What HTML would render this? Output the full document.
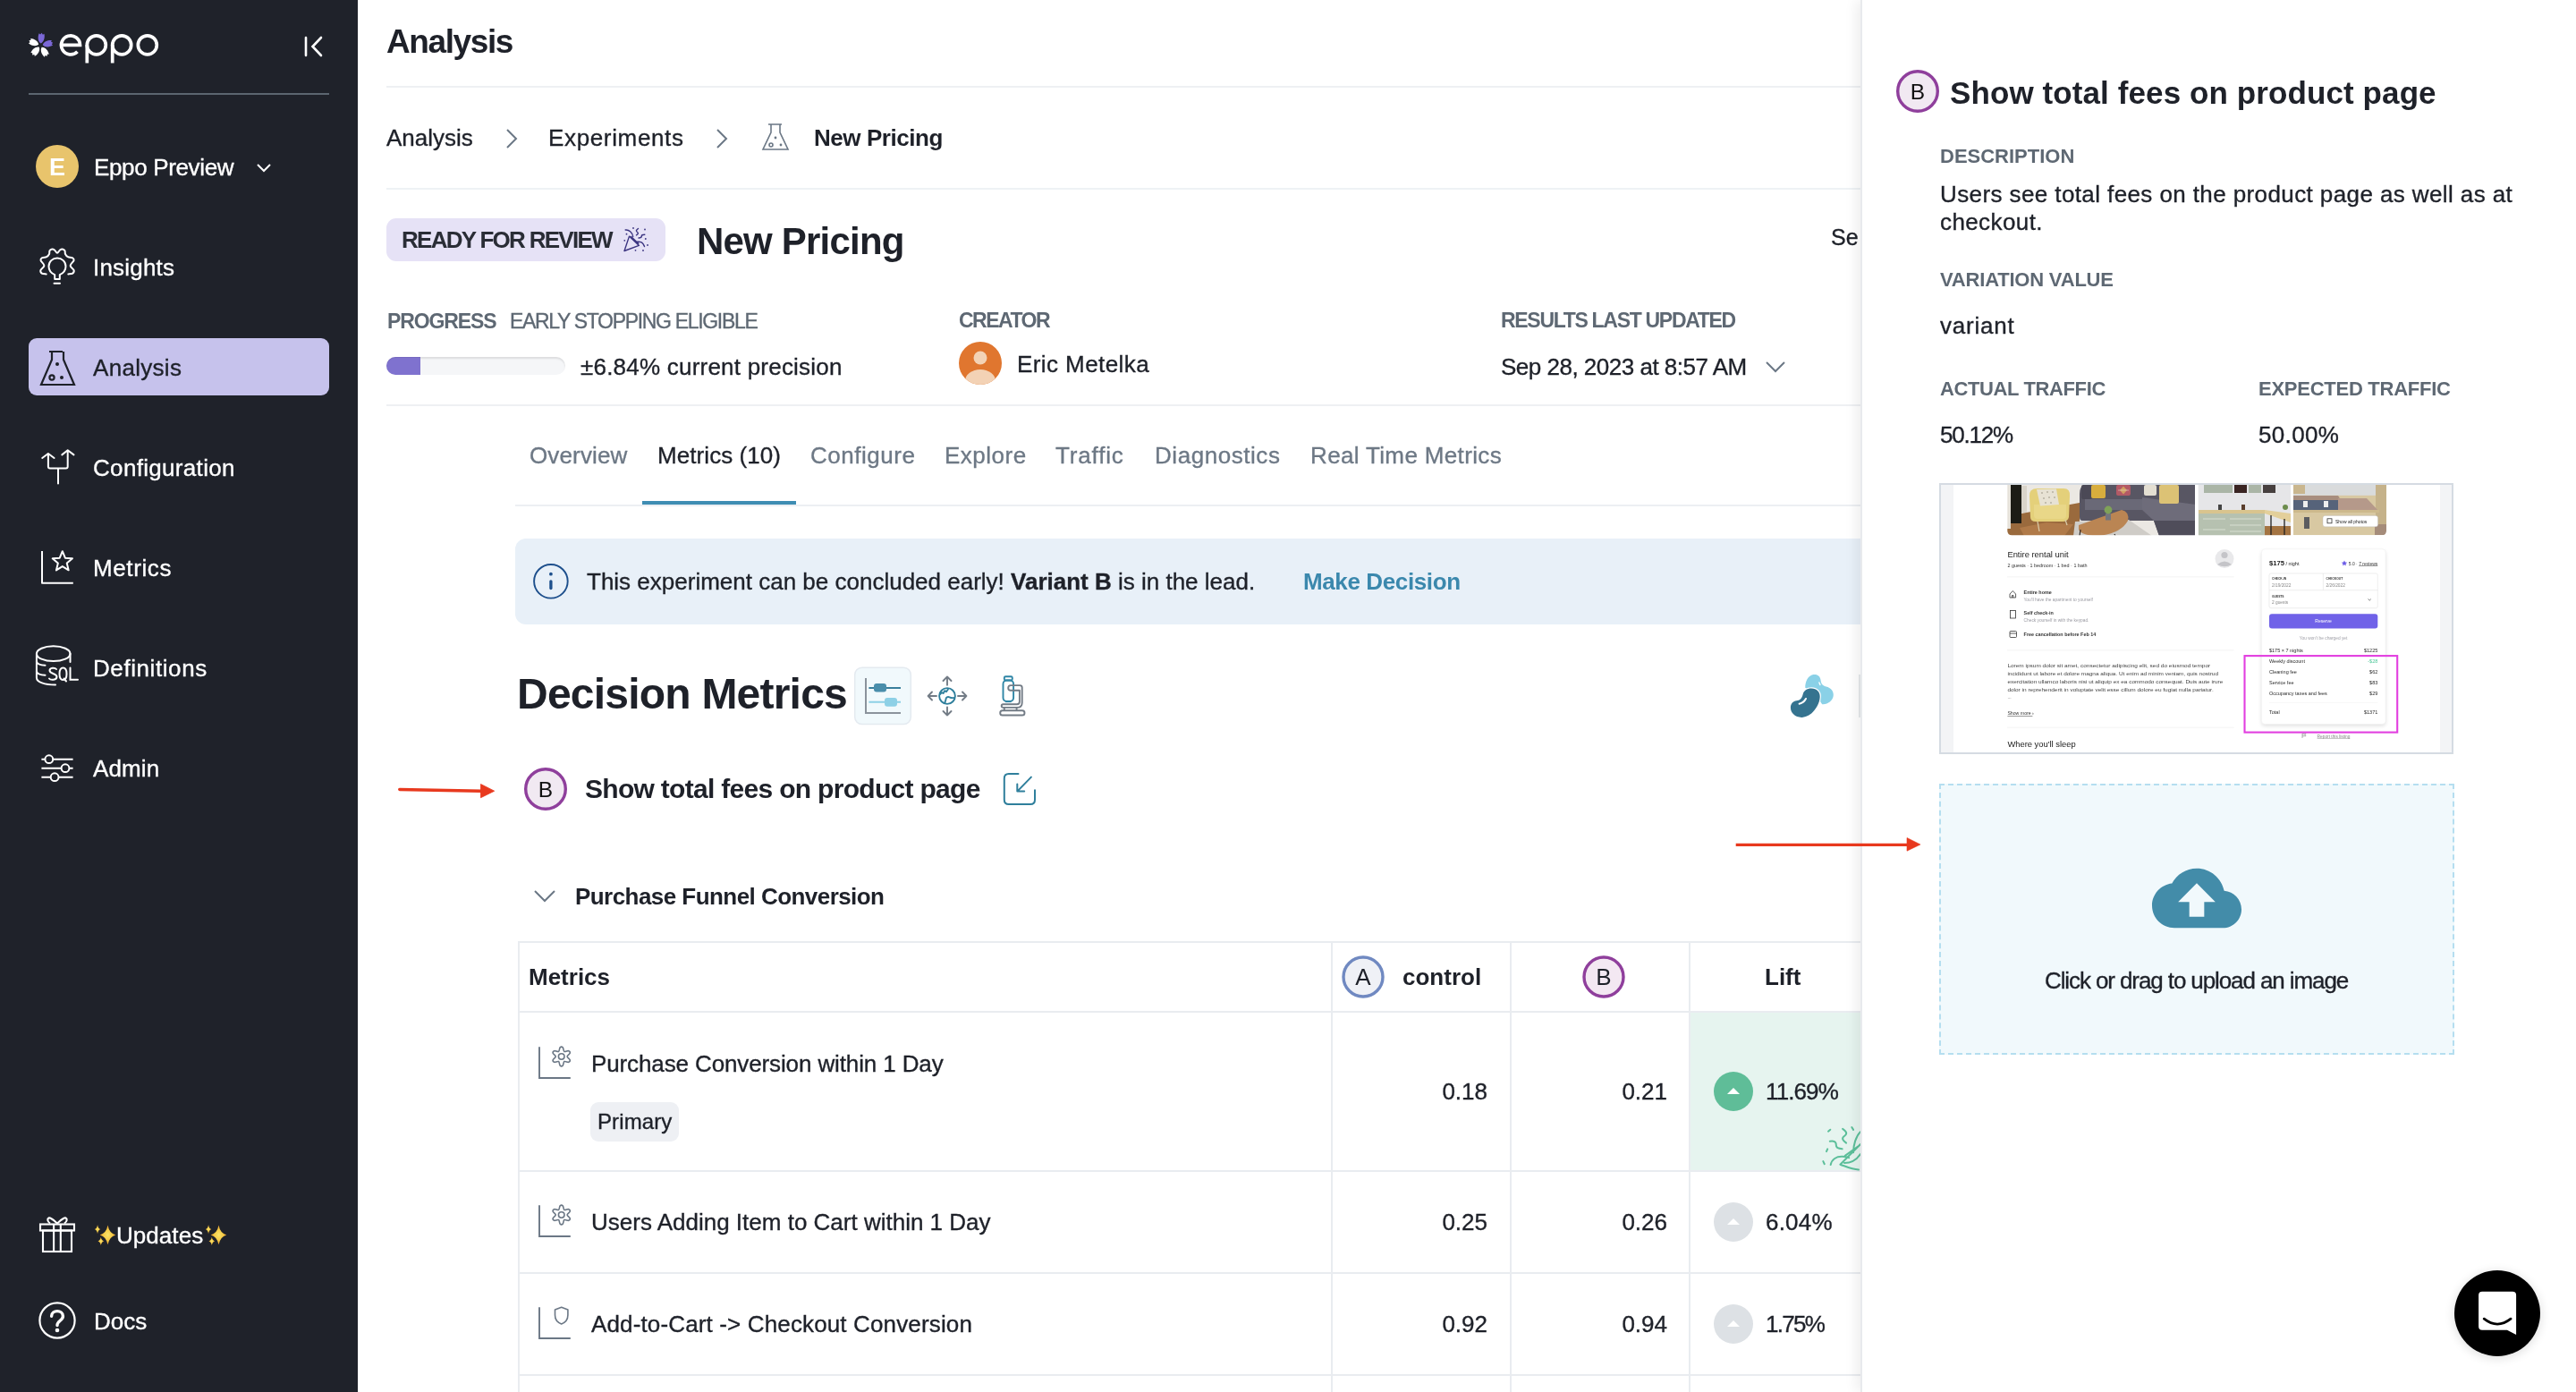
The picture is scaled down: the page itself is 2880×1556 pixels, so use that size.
<!DOCTYPE html>
<html><head><meta charset="utf-8"><title>Eppo</title>
<style>
html,body{margin:0;padding:0;width:2880px;height:1556px;overflow:hidden;background:#fff}
body{position:relative;font-family:"Liberation Sans",sans-serif}
.t{position:absolute;line-height:1;white-space:nowrap;font-family:"Liberation Sans",sans-serif;will-change:transform}
.r{position:absolute;display:block;will-change:transform}
</style></head><body>
<div class="r" style="left:0px;top:0px;width:400px;height:1556px;background:#1f222a"></div>
<svg class="r" style="left:30px;top:36px;" width="30" height="30" viewBox="0 0 30 30"><g transform="translate(15.4,14.8) scale(1.1) rotate(5)"><g transform="rotate(0)"><path d="M0 -2.2 C-3.4 -4 -3.8 -9 -2.6 -12.2 L-1.3 -11.2 L0 -12.8 L1.3 -11.2 L2.6 -12.2 C3.8 -9 3.4 -4 0 -2.2Z" fill="#7b68d6"/></g><g transform="rotate(72)"><path d="M0 -2.2 C-3.4 -4 -3.8 -9 -2.6 -12.2 L-1.3 -11.2 L0 -12.8 L1.3 -11.2 L2.6 -12.2 C3.8 -9 3.4 -4 0 -2.2Z" fill="#7b68d6"/></g><g transform="rotate(144)"><path d="M0 -2.2 C-3.4 -4 -3.8 -9 -2.6 -12.2 L-1.3 -11.2 L0 -12.8 L1.3 -11.2 L2.6 -12.2 C3.8 -9 3.4 -4 0 -2.2Z" fill="#ffffff"/></g><g transform="rotate(216)"><path d="M0 -2.2 C-3.4 -4 -3.8 -9 -2.6 -12.2 L-1.3 -11.2 L0 -12.8 L1.3 -11.2 L2.6 -12.2 C3.8 -9 3.4 -4 0 -2.2Z" fill="#ffffff"/></g><g transform="rotate(288)"><path d="M0 -2.2 C-3.4 -4 -3.8 -9 -2.6 -12.2 L-1.3 -11.2 L0 -12.8 L1.3 -11.2 L2.6 -12.2 C3.8 -9 3.4 -4 0 -2.2Z" fill="#ffffff"/></g></g></svg>
<svg class="r" style="left:0px;top:0px;" width="200" height="80" viewBox="0 0 200 80"><g fill="none" stroke="#fff" stroke-width="3.7"><path d="M69 50.3 H89.5 A10.5 10.5 0 1 0 86.5 57.8"/><circle cx="107.8" cy="50.3" r="10.5"/><path d="M97.3 50 V70.5"/><circle cx="136.2" cy="50.3" r="10.5"/><path d="M125.7 50 V70.5"/><circle cx="164.8" cy="50.3" r="10.5"/></g></svg>
<svg class="r" style="left:336px;top:36px;" width="30" height="30" viewBox="0 0 30 30"><path d="M6 6 V26 M23 6 L13.5 16 L23 26" stroke="#fff" stroke-width="2.6" fill="none" stroke-linecap="round"/></svg>
<div class="r" style="left:32px;top:104px;width:336px;height:2px;background:#5b6670"></div>
<div class="r" style="left:40px;top:162px;width:48px;height:48px;background:#e8c46c;border-radius:50%"></div>
<div class="t" style="left:55px;top:173.9px;font-size:27px;font-weight:700;color:#fff;">E</div>
<div class="t" style="left:105px;top:174.0px;font-size:26px;font-weight:400;color:#fff;-webkit-text-stroke:0.35px currentColor;letter-spacing:-0.35px;">Eppo Preview</div>
<svg class="r" style="left:285px;top:180px;" width="20" height="14" viewBox="0 0 20 14"><path d="M3 4 L10 11 L17 4" stroke="#fff" stroke-width="2" fill="none"/></svg>
<div class="r" style="left:32px;top:378px;width:336px;height:64px;background:#c6c2ec;border-radius:9px"></div>
<div class="t" style="left:104px;top:286.0px;font-size:26px;font-weight:400;color:#fff;-webkit-text-stroke:0.35px currentColor;letter-spacing:0.2px;">Insights</div>
<div class="t" style="left:104px;top:398.0px;font-size:26px;font-weight:400;color:#1e2129;-webkit-text-stroke:0.35px currentColor;letter-spacing:0.3px;">Analysis</div>
<div class="t" style="left:104px;top:510.0px;font-size:26px;font-weight:400;color:#fff;-webkit-text-stroke:0.35px currentColor;letter-spacing:0.32px;">Configuration</div>
<div class="t" style="left:104px;top:622.0px;font-size:26px;font-weight:400;color:#fff;-webkit-text-stroke:0.35px currentColor;letter-spacing:0.6px;">Metrics</div>
<div class="t" style="left:104px;top:734.0px;font-size:26px;font-weight:400;color:#fff;-webkit-text-stroke:0.35px currentColor;letter-spacing:0.58px;">Definitions</div>
<div class="t" style="left:104px;top:846.0px;font-size:26px;font-weight:400;color:#fff;-webkit-text-stroke:0.35px currentColor;letter-spacing:0.1px;">Admin</div>
<svg class="r" style="left:36px;top:268px;" width="56" height="56" viewBox="0 0 56 56"><g fill="none" stroke="#fff" stroke-width="2" stroke-linecap="round" stroke-linejoin="round"><path d="M15.7 38.4 C14.88 38.27 11.85 38.33 10.8 37.6 C9.75 36.87 8.97 35.43 9.4 34 C9.83 32.57 13.38 30.83 13.4 29 C13.42 27.17 9.87 24.47 9.5 23 C9.13 21.53 10.12 20.83 11.2 20.2 C12.28 19.57 14.70 19.90 16 19.2 C17.30 18.50 18.42 17.17 19 16 C19.58 14.83 18.97 13.12 19.5 12.2 C20.03 11.28 21.28 10.62 22.2 10.5 C23.12 10.38 24.03 10.78 25 11.5 C25.97 12.22 27.00 14.80 28 14.8 C29.00 14.80 30.03 12.22 31 11.5 C31.97 10.78 32.88 10.38 33.8 10.5 C34.72 10.62 35.97 11.28 36.5 12.2 C37.03 13.12 36.42 14.83 37 16 C37.58 17.17 38.70 18.50 40 19.2 C41.30 19.90 43.70 19.57 44.8 20.2 C45.90 20.83 46.97 21.53 46.6 23 C46.23 24.47 42.60 27.17 42.6 29 C42.60 30.83 46.17 32.57 46.6 34 C47.03 35.43 46.25 36.87 45.2 37.6 C44.15 38.33 41.12 38.27 40.3 38.4"/><path d="M25.2 44 V39.2 C20.5 37 18.5 33.5 18.5 29.8 C18.5 24.5 22.8 20.4 28 20.4 C33.2 20.4 37.5 24.5 37.5 29.8 C37.5 33.5 35.5 37 30.8 39.2 V44 Z"/><path d="M24.5 48.7 H31"/></g></svg>
<svg class="r" style="left:40px;top:388px;" width="48" height="48" viewBox="0 0 48 48"><g fill="none" stroke="#1e2129" stroke-width="2.2"><path d="M15 5 H30 M18 5 V14 L6 42 H43 L31 14 V5"/><circle cx="18" cy="34" r="2.6"/></g><circle cx="24" cy="19" r="2" fill="#1e2129"/><circle cx="29" cy="34" r="2" fill="#1e2129"/></svg>
<svg class="r" style="left:30px;top:490px;" width="70" height="70" viewBox="0 0 70 70"><g fill="none" stroke="#fff" stroke-width="2" stroke-linecap="round" stroke-linejoin="round"><path d="M17.2 22 L23.9 17 L30.6 22 M23.9 17.3 V31.4 Q23.9 33.4 25.9 33.4 H43.7 Q45.7 33.4 45.7 31.4 V13.5 M39.3 18.4 L45.7 13.2 L52.5 18.4 M35 33.4 V50.5"/></g></svg>
<svg class="r" style="left:30px;top:600px;" width="70" height="70" viewBox="0 0 70 70"><g fill="none" stroke="#fff" stroke-width="2" stroke-linejoin="round"><path d="M17 16 V51.7 H51.8"/><path d="M39.80 16.20 L42.86 23.69 L50.93 24.28 L44.75 29.51 L46.68 37.37 L39.80 33.10 L32.92 37.37 L34.85 29.51 L28.67 24.28 L36.74 23.69Z"/></g></svg>
<svg class="r" style="left:30px;top:715px;" width="70" height="70" viewBox="0 0 70 70"><g fill="none" stroke="#fff" stroke-width="2" stroke-linecap="round"><ellipse cx="29.7" cy="15.7" rx="18.8" ry="8.4"/><path d="M10.9 15.7 V42.5 C10.9 47.5 20 50.5 32 50.5"/><path d="M48.5 15.7 V25"/><path d="M10.9 24.5 C11.5 27 15 28.5 20.5 28.8 M10.9 35.5 C11.5 38 15 39.5 20.5 39.8"/><path d="M33 33 C31.5 31 25.5 31 25.5 34.5 C25.5 38.5 33.5 37.5 33.5 41.5 C33.5 45.5 26.5 45.5 25 43.5"/><path d="M40.5 31.5 C37.5 31.5 36.5 34 36.5 38.2 C36.5 42.5 37.5 45 40.5 45 C43.5 45 44.5 42.5 44.5 38.2 C44.5 34 43.5 31.5 40.5 31.5 Z M41.5 43.5 L44 46.5"/><path d="M48.5 31.5 V44.8 H57"/></g></svg>
<svg class="r" style="left:30px;top:820px;" width="70" height="70" viewBox="0 0 70 70"><g fill="none" stroke="#fff" stroke-width="2"><path d="M16.4 28.7 H20.2 M29.4 28.7 H51.6 M16.4 38.7 H38.4 M47.6 38.7 H51.6 M16.4 48.7 H26.5 M35.7 48.7 H51.6"/><circle cx="24.8" cy="28.7" r="4.4"/><circle cx="43" cy="38.7" r="4.4"/><circle cx="31.1" cy="48.7" r="4.4"/></g></svg>
<svg class="r" style="left:40px;top:1356px;" width="48" height="48" viewBox="0 0 48 48"><g fill="none" stroke="#fff" stroke-width="2.1"><rect x="5" y="12.5" width="38" height="7"/><rect x="8" y="19.5" width="32" height="23.5"/><path d="M20.1 12.5 V43 M27.8 12.5 V43"/><path d="M24 11.5 C20 8 16.5 4.5 14.5 5.5 C12.5 6.5 13 9.5 16 11.5 M24 11.5 C28 8 31.5 4.5 33.5 5.5 C35.5 6.5 35 9.5 32 11.5"/></g></svg>
<svg class="r" style="left:100px;top:1362px;" width="35" height="35" viewBox="0 0 35 35"><defs><radialGradient id="sg"><stop offset="0" stop-color="#f8e36a"/><stop offset="0.6" stop-color="#f4c743"/><stop offset="1" stop-color="#e99a2c"/></radialGradient></defs><g fill="url(#sg)"><path d="M20.5 7.499999999999998 Q22.084 16.438 29.3 18.4 Q22.084 20.362 20.5 29.299999999999997 Q18.916 20.362 11.7 18.4 Q18.916 16.438 20.5 7.499999999999998 Z"/><path d="M9.05 6.8999999999999995 Q9.644 11.164 12.350000000000001 12.1 Q9.644 13.036 9.05 17.3 Q8.456000000000001 13.036 5.750000000000001 12.1 Q8.456000000000001 11.164 9.05 6.8999999999999995 Z"/><path d="M12.8 20.799999999999997 Q13.412 24.572 16.2 25.4 Q13.412 26.227999999999998 12.8 30.0 Q12.188 26.227999999999998 9.4 25.4 Q12.188 24.572 12.8 20.799999999999997 Z"/></g></svg>
<svg class="r" style="left:223.5px;top:1362px;" width="35" height="35" viewBox="0 0 35 35"><defs><radialGradient id="sg2"><stop offset="0" stop-color="#f8e36a"/><stop offset="0.6" stop-color="#f4c743"/><stop offset="1" stop-color="#e99a2c"/></radialGradient></defs><g fill="url(#sg2)"><path d="M20.5 7.499999999999998 Q22.084 16.438 29.3 18.4 Q22.084 20.362 20.5 29.299999999999997 Q18.916 20.362 11.7 18.4 Q18.916 16.438 20.5 7.499999999999998 Z"/><path d="M9.05 6.8999999999999995 Q9.644 11.164 12.350000000000001 12.1 Q9.644 13.036 9.05 17.3 Q8.456000000000001 13.036 5.750000000000001 12.1 Q8.456000000000001 11.164 9.05 6.8999999999999995 Z"/><path d="M12.8 20.799999999999997 Q13.412 24.572 16.2 25.4 Q13.412 26.227999999999998 12.8 30.0 Q12.188 26.227999999999998 9.4 25.4 Q12.188 24.572 12.8 20.799999999999997 Z"/></g></svg>
<div class="t" style="left:129.6px;top:1368.0px;font-size:26px;font-weight:400;color:#fff;-webkit-text-stroke:0.35px currentColor;letter-spacing:0.05px;">Updates</div>
<svg class="r" style="left:40px;top:1452px;" width="48" height="48" viewBox="0 0 48 48"><circle cx="24" cy="24" r="19.6" fill="none" stroke="#fff" stroke-width="2.2"/><path d="M17.6 19.2 C17.6 11.8 30.4 11.8 30.4 19.2 C30.4 24.2 24 24.4 24 29.5" fill="none" stroke="#fff" stroke-width="3.4" stroke-linecap="round"/><circle cx="24" cy="35" r="2.3" fill="#fff"/></svg>
<div class="t" style="left:105px;top:1464.0px;font-size:26px;font-weight:400;color:#fff;-webkit-text-stroke:0.35px currentColor;">Docs</div>
<div class="r" style="left:400px;top:0px;width:1682px;height:1556px;background:#fff"></div>
<div class="t" style="left:432px;top:27.9px;font-size:37px;font-weight:700;color:#1e2129;letter-spacing:-1.4px;">Analysis</div>
<div class="r" style="left:432px;top:96px;width:1650px;height:2px;background:#eef0f3"></div>
<div class="t" style="left:432px;top:141.3px;font-size:26px;font-weight:400;color:#1e2129;-webkit-text-stroke:0.35px currentColor;">Analysis</div>
<svg class="r" style="left:560px;top:142px;" width="24" height="26" viewBox="0 0 24 26"><path d="M7 3 L17 13 L7 23" fill="none" stroke="#6b7785" stroke-width="2"/></svg>
<div class="t" style="left:613px;top:141.3px;font-size:26px;font-weight:400;color:#1e2129;-webkit-text-stroke:0.35px currentColor;letter-spacing:0.65px;">Experiments</div>
<svg class="r" style="left:795px;top:142px;" width="24" height="26" viewBox="0 0 24 26"><path d="M7 3 L17 13 L7 23" fill="none" stroke="#6b7785" stroke-width="2"/></svg>
<svg class="r" style="left:850px;top:136px;" width="34" height="34" viewBox="0 0 34 34"><g fill="none" stroke="#6b7785" stroke-width="1.6"><path d="M9 3 H24 M12 3 V12 L3 31 H31 L22 12 V3"/><circle cx="12" cy="26" r="2"/></g><circle cx="17" cy="18" r="1.4" fill="#6b7785"/><circle cx="23" cy="26" r="1.4" fill="#6b7785"/></svg>
<div class="t" style="left:910px;top:141.3px;font-size:26px;font-weight:700;color:#1e2129;letter-spacing:-0.45px;">New Pricing</div>
<div class="r" style="left:432px;top:210px;width:1650px;height:2px;background:#eef2f5"></div>
<div class="r" style="left:432px;top:244px;width:312px;height:48px;background:#e6e2f6;border-radius:11px"></div>
<div class="t" style="left:449px;top:255.4px;font-size:26px;font-weight:700;color:#2a2d36;letter-spacing:-1.72px;">READY FOR REVIEW</div>
<svg class="r" style="left:690px;top:248px;" width="45" height="40" viewBox="0 0 45 40"><g fill="none" stroke="#3b3480" stroke-width="1.4" stroke-linecap="round" stroke-linejoin="round"><path d="M8 32.5 L13.5 16.1 L24.4 26.4 Z M15.6 16.6 L23.8 24.2"/><path d="M9.2 9 C13 8.5 17 11.5 17.7 16.5 M23.5 7.5 C21 9.5 20.5 10 23 12 C24 13 23 14 21.5 14.8 M24 18 C26.5 18 27.3 17 27.3 16 C27.3 14.5 29 14.3 30.8 14.3 M22.5 22.3 C25 22.3 27 22 28 23.5 C29.5 25 30 26.5 30.5 27.5"/></g><g fill="#3b3480"><circle cx="10.5" cy="13.7" r="0.9"/><circle cx="8.3" cy="20.8" r="0.9"/><circle cx="18" cy="7" r="0.9"/><circle cx="31" cy="8.5" r="0.9"/><circle cx="31.8" cy="19" r="0.9"/><circle cx="34" cy="26" r="0.9"/><circle cx="20.5" cy="31.8" r="0.9"/><circle cx="29" cy="32" r="0.9"/></g></svg>
<div class="t" style="left:779px;top:248.9px;font-size:42px;font-weight:700;color:#1e2129;letter-spacing:-0.8px;">New Pricing</div>
<div class="t" style="left:2047px;top:252.7px;font-size:25px;font-weight:400;color:#1e2129;-webkit-text-stroke:0.35px currentColor;">Se</div>
<div class="t" style="left:433px;top:348.1px;font-size:23px;font-weight:700;color:#5e6873;letter-spacing:-1.1px;">PROGRESS</div>
<div class="t" style="left:570px;top:348.1px;font-size:23px;font-weight:400;color:#5e6873;-webkit-text-stroke:0.35px currentColor;letter-spacing:-1.32px;">EARLY STOPPING ELIGIBLE</div>
<div class="r" style="left:432px;top:399px;width:200px;height:20px;background:#f5f6f8;border-radius:10px;box-shadow:inset 0 2px 2px rgba(0,0,0,0.10)"></div>
<div class="r" style="left:432px;top:399px;width:38px;height:20px;background:#7f72cf;border-radius:10px 0 0 10px;box-shadow:inset 0 1px 1px rgba(0,0,0,0.08)"></div>
<div class="t" style="left:649px;top:396.7px;font-size:26px;font-weight:400;color:#1e2129;-webkit-text-stroke:0.35px currentColor;letter-spacing:0.22px;">±6.84% current precision</div>
<div class="t" style="left:1072px;top:346.8px;font-size:23px;font-weight:700;color:#5e6873;letter-spacing:-1.5px;">CREATOR</div>
<svg class="r" style="left:1072px;top:381.5px" width="48" height="48" viewBox="0 0 48 48"><defs><clipPath id="cc"><circle cx="24" cy="24" r="24"/></clipPath></defs><g clip-path="url(#cc)"><rect width="48" height="48" fill="#e0762f"/><circle cx="24" cy="18" r="7.5" fill="#f3d2b5"/><ellipse cx="24" cy="44" rx="17" ry="13" fill="#f3d2b5"/></g></svg>
<div class="t" style="left:1137px;top:393.9px;font-size:26px;font-weight:400;color:#1e2129;-webkit-text-stroke:0.35px currentColor;letter-spacing:0.42px;">Eric Metelka</div>
<div class="t" style="left:1678px;top:346.8px;font-size:23px;font-weight:700;color:#5e6873;letter-spacing:-1.3px;">RESULTS LAST UPDATED</div>
<div class="t" style="left:1678px;top:397.2px;font-size:26px;font-weight:400;color:#1e2129;-webkit-text-stroke:0.35px currentColor;letter-spacing:-0.5px;">Sep 28, 2023 at 8:57 AM</div>
<svg class="r" style="left:1972px;top:400px;" width="28" height="22" viewBox="0 0 28 22"><path d="M3 5 L13 15 L23 5" fill="none" stroke="#6b7785" stroke-width="2"/></svg>
<div class="r" style="left:432px;top:452px;width:1650px;height:2px;background:#eef0f3"></div>
<div class="t" style="left:592px;top:495.5px;font-size:26px;font-weight:400;color:#6d7885;-webkit-text-stroke:0.35px currentColor;letter-spacing:0.14px;">Overview</div>
<div class="t" style="left:735px;top:495.5px;font-size:26px;font-weight:400;color:#1e2129;-webkit-text-stroke:0.35px currentColor;letter-spacing:0.07px;">Metrics (10)</div>
<div class="t" style="left:906px;top:495.5px;font-size:26px;font-weight:400;color:#6d7885;-webkit-text-stroke:0.35px currentColor;letter-spacing:0.53px;">Configure</div>
<div class="t" style="left:1056px;top:495.5px;font-size:26px;font-weight:400;color:#6d7885;-webkit-text-stroke:0.35px currentColor;letter-spacing:0.5px;">Explore</div>
<div class="t" style="left:1180px;top:495.5px;font-size:26px;font-weight:400;color:#6d7885;-webkit-text-stroke:0.35px currentColor;letter-spacing:0.84px;">Traffic</div>
<div class="t" style="left:1291px;top:495.5px;font-size:26px;font-weight:400;color:#6d7885;-webkit-text-stroke:0.35px currentColor;letter-spacing:0.55px;">Diagnostics</div>
<div class="t" style="left:1465px;top:495.5px;font-size:26px;font-weight:400;color:#6d7885;-webkit-text-stroke:0.35px currentColor;letter-spacing:0.35px;">Real Time Metrics</div>
<div class="r" style="left:576px;top:564px;width:1506px;height:2px;background:#eceff3"></div>
<div class="r" style="left:718px;top:560px;width:172px;height:4px;background:#3f8db3"></div>
<div class="r" style="left:576px;top:602px;width:1520px;height:96px;background:#e8f0f8;border-radius:12px"></div>
<svg class="r" style="left:594px;top:628px;" width="44" height="44" viewBox="0 0 44 44"><circle cx="21.9" cy="21.8" r="18.8" fill="none" stroke="#1d4f8c" stroke-width="1.9"/><path d="M21.9 21.8 V29.6" stroke="#1d4f8c" stroke-width="3.3" stroke-linecap="round"/><circle cx="21.9" cy="13.7" r="1.9" fill="#1d4f8c"/></svg>
<div class="t" style="left:656px;top:637.4px;font-size:26px;font-weight:400;color:#1e2129;-webkit-text-stroke:0.35px currentColor;">This experiment can be concluded early! <b>Variant B</b> is in the lead.</div>
<div class="t" style="left:1457px;top:637.4px;font-size:26px;font-weight:700;color:#3b88ad;letter-spacing:-0.38px;">Make Decision</div>
<div class="t" style="left:578px;top:751.7px;font-size:48px;font-weight:700;color:#1e2129;letter-spacing:-0.78px;">Decision Metrics</div>
<svg class="r" style="left:950px;top:740px;" width="210" height="75" viewBox="0 0 210 75"><rect x="5.7" y="6.2" width="62.6" height="63.3" rx="8" fill="#f1f9fc" stroke="#e4eaf0" stroke-width="1.5"/><path d="M18 18 V57 H57" fill="none" stroke="#8b939c" stroke-width="2"/><path d="M21.4 29 H57" stroke="#3a7f9c" stroke-width="2"/><rect x="27" y="24" width="14" height="9.6" rx="3" fill="#4a8eab"/><path d="M21.4 44.8 H57" stroke="#8dd0e6" stroke-width="2"/><rect x="39" y="40" width="14" height="9.7" rx="3" fill="#8dd0e6"/><g fill="none" stroke="#737c86" stroke-width="1.9" stroke-linecap="round" stroke-linejoin="round"><path d="M109 16.5 V25.7 M104.5 21 L109 16.5 L113.5 21 M109 50.5 V59.5 M104.5 55 L109 59.5 L113.5 55 M87.6 38 H97 M92 33.5 L87.6 38 L92 42.5 M121 38 H130.4 M126 33.5 L130.4 38 L126 42.5"/></g><g fill="none" stroke="#2f7f9c" stroke-width="1.9" stroke-linejoin="round"><circle cx="109" cy="38" r="8.9"/><path d="M100.8 36.5 L102.8 34.2 L104.6 35 L106.2 32.2 L108 33.2 L110.3 30 M106.5 46.5 C106 44.5 107.5 43.5 107.5 41.5 C107.5 39.5 109.5 38.5 111.5 39.3 C113 40 114.5 40.5 117.2 39.8"/></g><g fill="none" stroke="#2f86a6" stroke-width="1.9"><rect x="172.8" y="16.3" width="9" height="4.2" rx="1.5"/><rect x="171.5" y="20.5" width="11.6" height="23.5" rx="4"/><path d="M174 44.2 H180.5"/></g><g fill="none" stroke="#737c86" stroke-width="1.9" stroke-linejoin="round"><path d="M180 26.1 H190.2 Q192.7 26.1 192.7 28.6 V45.5 Q192.7 50.9 187.3 50.9 H171.6 Q169.7 50.9 169.7 49.1 Q169.7 47.3 171.6 47.3 H186.9 Q189.9 47.3 189.9 44.3 V31.8 H180 Q177.2 31.8 177.2 29 Q177.2 26.1 180 26.1 Z"/><path d="M172.8 51 V54.2 M186.6 51 V54.2"/><rect x="168.2" y="54.3" width="27.3" height="5.2" rx="2.6"/></g></svg>
<svg class="r" style="left:1995px;top:748px;" width="60" height="60" viewBox="0 0 60 60"><path d="M23.3 20.7 C23 15 26 7 32.3 6 C37 5.3 40 8 40.5 12 C41 15.5 42 18.5 46.6 19.4 C52 20.5 55.5 25 54.7 30 C54 35 48 40 42.2 39.2 L36 30 Z" fill="#8ad1e7"/><path d="M38.9 15 L39.9 17.6" stroke="#fff" stroke-width="1.4" stroke-linecap="round"/><path d="M30.2 21.5 C36 21.5 40 25.5 39.7 31 C39.5 38 35 45 30.2 49.6 C26 53 22 54 19.4 53.9 C12 54 7 49 6.9 43.1 C6.8 38.5 10 35.5 13.5 35.2 C17 35 19.5 33 20.7 28 C21.8 24 25 21.5 30.2 21.5 Z" fill="#35738f" stroke="#fff" stroke-width="2.4" paint-order="stroke"/><path d="M16.6 38.8 C19.5 38 22.5 36 24 33" fill="none" stroke="#fff" stroke-width="2" stroke-linecap="round"/></svg>
<div class="r" style="left:2078px;top:754px;width:2.5px;height:48px;background:#e6e9ec"></div>
<svg class="r" style="left:440px;top:870px;" width="120" height="28" viewBox="0 0 120 28"><path d="M6.75 12.4 L98 14.2" stroke="#e8391e" stroke-width="3.5" stroke-linecap="round"/><path d="M97.5 6.5 L112.7 14.2 L97.5 21.7 Z" fill="#e8391e" stroke="#e8391e" stroke-width="0.8" stroke-linejoin="round"/></svg>
<svg class="r" style="left:584px;top:856px;" width="52" height="52" viewBox="0 0 52 52"><circle cx="26" cy="26" r="22.3" fill="#f1e9f2" stroke="#8f3f9c" stroke-width="3.4"/><text x="26" y="34.6" text-anchor="middle" font-family="Liberation Sans" font-size="24.5" fill="#111">B</text></svg>
<div class="t" style="left:654px;top:867.1px;font-size:30px;font-weight:700;color:#1e2129;letter-spacing:-0.7px;">Show total fees on product page</div>
<svg class="r" style="left:1120px;top:862px;" width="40" height="40" viewBox="0 0 40 40"><g fill="none" stroke="#2f7f9c" stroke-width="2" stroke-linecap="round" stroke-linejoin="round"><path d="M18.5 2.9 H7.8 Q2.8 2.9 2.8 7.9 V31.9 Q2.8 36.9 7.8 36.9 H32 Q37 36.9 37 31.9 V21.3"/><path d="M32.9 6.6 L17.8 22.1 M17.3 14.5 V22.6 H25.2"/></g></svg>
<svg class="r" style="left:594px;top:990px;" width="32" height="24" viewBox="0 0 32 24"><path d="M4 6 L15 17 L26 6" fill="none" stroke="#6b7785" stroke-width="2"/></svg>
<div class="t" style="left:643px;top:989.4px;font-size:26px;font-weight:700;color:#1e2129;letter-spacing:-0.55px;">Purchase Funnel Conversion</div>
<div class="r" style="left:579px;top:1052px;width:1503px;height:2px;background:#e9ecf0"></div>
<div class="r" style="left:579px;top:1052px;width:2px;height:504px;background:#e9ecf0"></div>
<div class="r" style="left:579px;top:1130px;width:1503px;height:2px;background:#e9ecf0"></div>
<div class="r" style="left:579px;top:1308px;width:1503px;height:2px;background:#e9ecf0"></div>
<div class="r" style="left:579px;top:1422px;width:1503px;height:2px;background:#e9ecf0"></div>
<div class="r" style="left:579px;top:1536px;width:1503px;height:2px;background:#e9ecf0"></div>
<div class="r" style="left:1488px;top:1052px;width:2px;height:504px;background:#e9ecf0"></div>
<div class="r" style="left:1688px;top:1052px;width:2px;height:504px;background:#e9ecf0"></div>
<div class="r" style="left:1888px;top:1052px;width:2px;height:504px;background:#e9ecf0"></div>
<div class="t" style="left:591px;top:1079.3px;font-size:26px;font-weight:700;color:#1e2129;">Metrics</div>
<svg class="r" style="left:1499px;top:1067px;" width="50" height="50" viewBox="0 0 50 50"><circle cx="25" cy="25" r="22" fill="#eff1f6" stroke="#7089c1" stroke-width="3.4"/><text x="25" y="34" text-anchor="middle" font-family="Liberation Sans" font-size="26" fill="#1e2129">A</text></svg>
<div class="t" style="left:1568px;top:1079.0px;font-size:26px;font-weight:700;color:#1e2129;">control</div>
<svg class="r" style="left:1768px;top:1067px;" width="50" height="50" viewBox="0 0 50 50"><circle cx="25" cy="25" r="22" fill="#f3e8f2" stroke="#8f3f9c" stroke-width="3.4"/><text x="25" y="34" text-anchor="middle" font-family="Liberation Sans" font-size="26" fill="#1e2129">B</text></svg>
<div class="t" style="left:1973px;top:1079.0px;font-size:26px;font-weight:700;color:#1e2129;">Lift</div>
<div class="r" style="left:1890px;top:1132px;width:192px;height:176px;background:#e6f4ef"></div>
<svg class="r" style="left:599px;top:1168px;" width="42" height="40" viewBox="0 0 42 40"><g fill="none" stroke="#6b7785" stroke-width="1.9"><path d="M4 2.3 V37 H38.8"/></g><g fill="none" stroke="#6b7785" stroke-width="1.6"><path d="M27.19 2.91 C27.98 2.15 29.43 2.15 30.21 2.91 C31.00 3.67 30.82 6.84 31.9 7.46 C32.98 8.08 35.63 6.35 36.68 6.65 C37.73 6.95 38.45 8.20 38.19 9.26 C37.93 10.32 35.10 11.75 35.1 13.0 C35.10 14.25 37.93 15.68 38.19 16.74 C38.45 17.80 37.73 19.05 36.68 19.35 C35.63 19.65 32.98 17.92 31.9 18.54 C30.82 19.16 31.00 22.33 30.21 23.09 C29.43 23.85 27.98 23.85 27.19 23.09 C26.41 22.33 26.58 19.16 25.5 18.54 C24.42 17.92 21.77 19.65 20.72 19.35 C19.67 19.05 18.95 17.80 19.21 16.74 C19.47 15.68 22.30 14.25 22.3 13.0 C22.30 11.75 19.47 10.32 19.21 9.26 C18.95 8.20 19.67 6.95 20.72 6.65 C21.77 6.35 24.42 8.08 25.5 7.46 C26.58 6.84 26.41 3.67 27.19 2.91Z"/><circle cx="28.7" cy="13" r="3.3"/></g></svg>
<div class="t" style="left:661px;top:1175.6px;font-size:26px;font-weight:400;color:#1e2129;-webkit-text-stroke:0.35px currentColor;letter-spacing:-0.12px;">Purchase Conversion within 1 Day</div>
<div class="r" style="left:660px;top:1232px;width:99px;height:44px;background:#eef0f4;border-radius:9px"></div>
<div class="t" style="left:668px;top:1241.5px;font-size:24px;font-weight:400;color:#1e2129;-webkit-text-stroke:0.35px currentColor;letter-spacing:0.1px;">Primary</div>
<div class="t" style="left:1663px;top:1207.0px;font-size:26px;font-weight:400;color:#1e2129;-webkit-text-stroke:0.35px currentColor;transform:translateX(-100%)">0.18</div>
<div class="t" style="left:1864px;top:1207.0px;font-size:26px;font-weight:400;color:#1e2129;-webkit-text-stroke:0.35px currentColor;transform:translateX(-100%)">0.21</div>
<svg class="r" style="left:1916px;top:1198px;" width="44" height="44" viewBox="0 0 44 44"><circle cx="22" cy="22" r="22" fill="#5fbd98"/><path d="M15 25 L22 18 L29 25 Z" fill="#fff"/></svg>
<div class="t" style="left:1974px;top:1207.0px;font-size:26px;font-weight:400;color:#1e2129;-webkit-text-stroke:0.35px currentColor;letter-spacing:-0.9px;">11.69%</div>
<svg class="r" style="left:2020px;top:1250px" width="60" height="60" viewBox="0 0 60 60"><g fill="none" stroke="#5cbf9a" stroke-width="2" stroke-linecap="round" stroke-linejoin="round"><path d="M24 14.7 L26.3 12.7 M50.3 10 L52.1 12.9 M22 37.2 L23.2 34.3 M18.3 48.1 L19.8 51.2"/><path d="M40.1 11.8 C43.5 14 46 17 42.5 19.5 C38 22.5 40.5 25 44.1 27.6"/><path d="M25.8 25.8 C30 25 33 26 32.8 30 C32.6 33.5 36 34 39.6 34.3"/><path d="M26.7 52.1 C28 46 33 42.5 40 42.8 C43 43 45.5 43.5 47.2 44.1"/><path d="M37.4 51.7 L60 29 M37.4 51.7 C44 54 50 57 58 57.5 M60 40 C56 46 50 50 42 50 M52.1 38.3 C52 30 55 20 60 15.1 M42.8 41.9 L60 29.5"/></g></svg>
<svg class="r" style="left:599px;top:1345px;" width="42" height="40" viewBox="0 0 42 40"><g fill="none" stroke="#6b7785" stroke-width="1.9"><path d="M4 2.3 V37 H38.8"/></g><g fill="none" stroke="#6b7785" stroke-width="1.6"><path d="M27.19 2.91 C27.98 2.15 29.43 2.15 30.21 2.91 C31.00 3.67 30.82 6.84 31.9 7.46 C32.98 8.08 35.63 6.35 36.68 6.65 C37.73 6.95 38.45 8.20 38.19 9.26 C37.93 10.32 35.10 11.75 35.1 13.0 C35.10 14.25 37.93 15.68 38.19 16.74 C38.45 17.80 37.73 19.05 36.68 19.35 C35.63 19.65 32.98 17.92 31.9 18.54 C30.82 19.16 31.00 22.33 30.21 23.09 C29.43 23.85 27.98 23.85 27.19 23.09 C26.41 22.33 26.58 19.16 25.5 18.54 C24.42 17.92 21.77 19.65 20.72 19.35 C19.67 19.05 18.95 17.80 19.21 16.74 C19.47 15.68 22.30 14.25 22.3 13.0 C22.30 11.75 19.47 10.32 19.21 9.26 C18.95 8.20 19.67 6.95 20.72 6.65 C21.77 6.35 24.42 8.08 25.5 7.46 C26.58 6.84 26.41 3.67 27.19 2.91Z"/><circle cx="28.7" cy="13" r="3.3"/></g></svg>
<div class="t" style="left:661px;top:1353.0px;font-size:26px;font-weight:400;color:#1e2129;-webkit-text-stroke:0.35px currentColor;">Users Adding Item to Cart within 1 Day</div>
<div class="t" style="left:1663px;top:1353.0px;font-size:26px;font-weight:400;color:#1e2129;-webkit-text-stroke:0.35px currentColor;transform:translateX(-100%)">0.25</div>
<div class="t" style="left:1864px;top:1353.0px;font-size:26px;font-weight:400;color:#1e2129;-webkit-text-stroke:0.35px currentColor;transform:translateX(-100%)">0.26</div>
<svg class="r" style="left:1916px;top:1344px;" width="44" height="44" viewBox="0 0 44 44"><circle cx="22" cy="22" r="22" fill="#dde1e5"/><path d="M15 25 L22 18 L29 25 Z" fill="#fff"/></svg>
<div class="t" style="left:1974px;top:1353.0px;font-size:26px;font-weight:400;color:#1e2129;-webkit-text-stroke:0.35px currentColor;letter-spacing:0.2px;">6.04%</div>
<svg class="r" style="left:599px;top:1459px;" width="42" height="40" viewBox="0 0 42 40"><g fill="none" stroke="#6b7785" stroke-width="1.9"><path d="M4 2.3 V37 H38.8"/></g><path d="M21.5 5 L28.7 2.2 L35.9 5 V11 C35.9 16 32.5 19.5 28.7 21 C24.9 19.5 21.5 16 21.5 11 Z" fill="none" stroke="#6b7785" stroke-width="1.6" stroke-linejoin="round"/></svg>
<div class="t" style="left:661px;top:1467.0px;font-size:26px;font-weight:400;color:#1e2129;-webkit-text-stroke:0.35px currentColor;letter-spacing:0.14px;">Add-to-Cart -&gt; Checkout Conversion</div>
<div class="t" style="left:1663px;top:1467.0px;font-size:26px;font-weight:400;color:#1e2129;-webkit-text-stroke:0.35px currentColor;transform:translateX(-100%)">0.92</div>
<div class="t" style="left:1864px;top:1467.0px;font-size:26px;font-weight:400;color:#1e2129;-webkit-text-stroke:0.35px currentColor;transform:translateX(-100%)">0.94</div>
<svg class="r" style="left:1916px;top:1458px;" width="44" height="44" viewBox="0 0 44 44"><circle cx="22" cy="22" r="22" fill="#dde1e5"/><path d="M15 25 L22 18 L29 25 Z" fill="#fff"/></svg>
<div class="t" style="left:1974px;top:1467.0px;font-size:26px;font-weight:400;color:#1e2129;-webkit-text-stroke:0.35px currentColor;letter-spacing:-1.7px;">1.75%</div>
<div class="r" style="left:2081px;top:0px;width:799px;height:1556px;background:#fff;box-shadow:-5px 0 14px rgba(0,0,0,0.075)"></div>
<div class="r" style="left:2080px;top:0px;width:2px;height:1556px;background:#e8eaed"></div>
<svg class="r" style="left:2118px;top:76px;" width="52" height="52" viewBox="0 0 52 52"><circle cx="26" cy="26" r="22.3" fill="#f1e9f2" stroke="#8f3f9c" stroke-width="3.4"/><text x="26" y="34.6" text-anchor="middle" font-family="Liberation Sans" font-size="24.5" fill="#111">B</text></svg>
<div class="t" style="left:2180px;top:86.0px;font-size:35px;font-weight:700;color:#1e2129;letter-spacing:0.1px;">Show total fees on product page</div>
<div class="t" style="left:2168.5px;top:163.7px;font-size:22px;font-weight:700;color:#5e6873;letter-spacing:0px;">DESCRIPTION</div>
<div class="t" style="left:2168.5px;top:203.8px;font-size:26px;font-weight:400;color:#1e2129;-webkit-text-stroke:0.35px currentColor;letter-spacing:0.4px;">Users see total fees on the product page as well as at</div>
<div class="t" style="left:2168.5px;top:234.8px;font-size:26px;font-weight:400;color:#1e2129;-webkit-text-stroke:0.35px currentColor;letter-spacing:0.4px;">checkout.</div>
<div class="t" style="left:2168.5px;top:301.9px;font-size:22px;font-weight:700;color:#5e6873;letter-spacing:-0.2px;">VARIATION VALUE</div>
<div class="t" style="left:2168.5px;top:351.2px;font-size:26px;font-weight:400;color:#1e2129;-webkit-text-stroke:0.35px currentColor;letter-spacing:0.8px;">variant</div>
<div class="t" style="left:2168.5px;top:423.7px;font-size:22px;font-weight:700;color:#5e6873;letter-spacing:-0.38px;">ACTUAL TRAFFIC</div>
<div class="t" style="left:2525px;top:423.7px;font-size:22px;font-weight:700;color:#5e6873;letter-spacing:-0.26px;">EXPECTED TRAFFIC</div>
<div class="t" style="left:2168.5px;top:472.7px;font-size:26px;font-weight:400;color:#1e2129;-webkit-text-stroke:0.35px currentColor;letter-spacing:-1.2px;">50.12%</div>
<div class="t" style="left:2525px;top:472.7px;font-size:26px;font-weight:400;color:#1e2129;-webkit-text-stroke:0.35px currentColor;letter-spacing:0.35px;">50.00%</div>
<svg class="r" style="left:2168px;top:540px;" width="575" height="303" viewBox="0 0 575 303"><defs><clipPath id="ph1"><path d="M76.3 1.8 H286 V58.2 H81.3 Q76.3 58.2 76.3 53.2 Z"/></clipPath><clipPath id="ph3"><path d="M396 1.8 H500 V53.2 Q500 58.2 495 58.2 H396 Z"/></clipPath><filter id="blr" x="-5%" y="-5%" width="110%" height="110%"><feGaussianBlur stdDeviation="2"/></filter><filter id="pb" x="0" y="0" width="100%" height="100%"><feGaussianBlur stdDeviation="0.7"/></filter></defs><rect x="0" y="0" width="575" height="303" fill="#fff"/><rect x="1" y="1" width="15" height="301" fill="#f3f4f6"/><rect x="560" y="1" width="14" height="301" fill="#f3f4f6"/><g clip-path="url(#ph1)"><g filter="url(#pb)"><rect x="76" y="1" width="211" height="58" fill="#ebe8e3"/><path d="M76 40 L92 34 L157 22 L157 59 H76 Z" fill="#9a6a3e"/><path d="M90 50 L120 44 L150 46 L140 59 H95 Z" fill="#b07a48"/><rect x="76" y="1" width="4" height="50" fill="#e6e2da"/><rect x="80" y="1" width="12" height="44" fill="#1f1a19"/><rect x="92" y="3" width="6" height="30" fill="#d9d4ca"/><path d="M101 15 Q100 6 110 6 H139 Q147 6 146 15 L145 38 Q144 43 138 43 H108 Q102 43 102 38 Z" fill="#e4d07a"/><path d="M106 24 H142 V36 Q142 40 138 40 H110 Q106 40 106 36 Z" fill="#e9d788"/><path d="M109 7 L131 6.5 L134 24 L113 25.5 Z" fill="#e7e2d4"/><g fill="#8f8a7a" opacity="0.6"><circle cx="115" cy="11" r="0.9"/><circle cx="121" cy="10" r="0.9"/><circle cx="127" cy="10" r="0.9"/><circle cx="117" cy="17" r="0.9"/><circle cx="123" cy="16" r="0.9"/><circle cx="129" cy="16" r="0.9"/><circle cx="119" cy="22" r="0.9"/><circle cx="125" cy="22" r="0.9"/></g><path d="M110 43 L112 54 M141 41 L143 47" stroke="#d8c9a6" stroke-width="1.3"/><path d="M157 12 Q157 3 163 2 H287 V59 H246 L240 42 H160 Q157 42 157 38 Z" fill="#585664"/><path d="M163 18 H227 V30 H163 Z" fill="#6b6977"/><path d="M227 16 L287 24 V45 L240 42 L227 30 Z" fill="#6e6c7a"/><path d="M240 42 H287 V59 H246 Z" fill="#4f4d5a"/><rect x="159" y="2" width="12" height="16" rx="2" fill="#4c4a56"/><rect x="170" y="2" width="16" height="15" rx="2" fill="#d8ad3c"/><rect x="198" y="2" width="16" height="12" rx="2" fill="#b35a66"/><path d="M206 3.5 L210 8 L206 12.5 L202 8 Z" fill="#d8b060" opacity="0.8"/><path d="M200 8 H212" stroke="#e8e0d0" stroke-width="0.8" opacity="0.7"/><rect x="229" y="2" width="14" height="12" rx="2" fill="#e4dfd2"/><rect x="246" y="2" width="22" height="21" rx="2" fill="#dcc274"/><path d="M152 43 L212 41 L238 59 H150 Z" fill="#cfccc7"/><path d="M165 50 L172 45 L179 50 L172 55 Z M190 50 L197 45 L204 50 L197 55 Z" fill="#c3c1bd"/><path d="M156 47 L204 30 Q213 32 211 42 Q204 55 182 58.5 Q160 60 156 52 Z" fill="#ba8553"/><path d="M158 52 L157 59 M196 57 L197 59" stroke="#2a2420" stroke-width="1.2"/><rect x="186" y="34" width="6" height="7.5" fill="#75767b"/><circle cx="189" cy="30" r="4.4" fill="#7fa259"/></g></g><rect x="289.7" y="1.8" width="103.3" height="56.4" fill="#e6e6e8"/><rect x="296" y="2" width="32" height="9" fill="#aab5a6"/><rect x="330" y="2" width="14" height="9" fill="#3a2422"/><rect x="346" y="2" width="14" height="9" fill="#aab5a6"/><rect x="362" y="2" width="14" height="9" fill="#47403f"/><rect x="290" y="30" width="74" height="4" fill="#d9c48e"/><path d="M364 30 L393 34 V44 L364 34 Z" fill="#e3cf9a"/><rect x="290" y="34" width="74" height="24.2" fill="#b6c1b0"/><path d="M295 40 H320 M325 40 H360 M325 47 H360 M295 52 H320 M325 54 H360" stroke="#d8dfd2" stroke-width="1"/><rect x="364" y="48" width="29" height="10.2" fill="#a47442"/><path d="M371 36 V58 M386 40 V58" stroke="#222" stroke-width="1.3"/><circle cx="387" cy="27" r="3" fill="#6c8c4c"/><rect x="312" y="24" width="4" height="6" fill="#444"/><rect x="338" y="24" width="4" height="6" fill="#5a3e2c"/><g clip-path="url(#ph3)"><g filter="url(#pb)"><rect x="396" y="1.8" width="104" height="56.4" fill="#d8c8a2"/><rect x="396" y="1.8" width="104" height="12" fill="#d9dbdc"/><rect x="396" y="2" width="13" height="10" fill="#c9b68e"/><rect x="488" y="2" width="12" height="56" fill="#c5b28a"/><path d="M396 14 H446 L449 19 H396 Z" fill="#a88e7e"/><rect x="396" y="19" width="50" height="11" fill="#56637a"/><rect x="407" y="20" width="5" height="7" fill="#eee"/><rect x="430" y="20" width="5" height="7" fill="#eee"/><path d="M446 17 L478 17 L492 32 H446 Z" fill="#b5998a"/><rect x="396" y="30" width="96" height="3" fill="#cdb98c"/><rect x="408" y="38" width="6" height="13" fill="#5b5b60"/><rect x="469" y="42" width="6" height="6" fill="#5b5b60"/><rect x="487" y="46" width="13" height="12" fill="#a58c7a"/></g></g><rect x="429" y="36.4" width="61.5" height="12.4" rx="2.5" fill="#fff" stroke="#bbb" stroke-width="0.4"/><rect x="434" y="39.8" width="5" height="5" fill="none" stroke="#333" stroke-width="0.8"/><text x="443" y="45" font-family="Liberation Sans" font-size="5" fill="#222">Show all photos</text><text x="76.4" y="83.2" font-family="Liberation Sans" font-size="9.4" fill="#222">Entire rental unit</text><text x="76.4" y="94.3" font-family="Liberation Sans" font-size="5.4" fill="#333">2 guests · 1 bedroom · 1 bed · 1 bath</text><circle cx="319" cy="84.6" r="10.5" fill="#e9e9eb"/><circle cx="319" cy="80.5" r="3.6" fill="#c4c4c8"/><path d="M311 91 Q319 84 327 91 Q319 95.5 311 91Z" fill="#c4c4c8"/><rect x="76" y="104.6" width="253.6" height="0.6" fill="#ececec"/><path d="M79 124 L82.3 120.5 L85.6 124 V128 H79 Z M81.5 128 V125.5 H83 V128" fill="none" stroke="#333" stroke-width="0.8"/><rect x="79.5" y="142.5" width="6" height="8.5" fill="none" stroke="#333" stroke-width="0.8"/><rect x="79" y="165.5" width="7.5" height="7" rx="1" fill="none" stroke="#333" stroke-width="0.8"/><path d="M79 168 H86.5" stroke="#333" stroke-width="0.8"/><text x="94.6" y="123.7" font-family="Liberation Sans" font-size="5.4" font-weight="700" fill="#333">Entire home</text><text x="94.6" y="132.2" font-family="Liberation Sans" font-size="4.8" fill="#9a9aa2">You'll have the apartment to yourself</text><text x="94.6" y="146.6" font-family="Liberation Sans" font-size="5.4" font-weight="700" fill="#333">Self check-in</text><text x="94.6" y="154.7" font-family="Liberation Sans" font-size="4.8" fill="#9a9aa2">Check yourself in with the keypad.</text><text x="94.6" y="170.9" font-family="Liberation Sans" font-size="5.4" font-weight="700" fill="#333">Free cancellation before Feb 14</text><rect x="76" y="186.6" width="253.6" height="0.6" fill="#ececec"/><text x="76.4" y="205.8" font-family="Liberation Sans" font-size="5.3" fill="#444" textLength="226.8" lengthAdjust="spacingAndGlyphs">Lorem ipsum dolor sit amet, consectetur adipiscing elit, sed do eiusmod tempor</text><text x="76.4" y="214.7" font-family="Liberation Sans" font-size="5.3" fill="#444" textLength="235.6" lengthAdjust="spacingAndGlyphs">incididunt ut labore et dolore magna aliqua. Ut enim ad minim veniam, quis nostrud</text><text x="76.4" y="223.6" font-family="Liberation Sans" font-size="5.3" fill="#444" textLength="240.9" lengthAdjust="spacingAndGlyphs">exercitation ullamco laboris nisi ut aliquip ex ea commodo consequat. Duis aute irure</text><text x="76.4" y="232.5" font-family="Liberation Sans" font-size="5.3" fill="#444" textLength="230.3" lengthAdjust="spacingAndGlyphs">dolor in reprehenderit in voluptate velit esse cillum dolore eu fugiat nulla pariatur.</text><text x="76.4" y="241" font-family="Liberation Sans" font-size="5" fill="#555">...</text><text x="76.4" y="259" font-family="Liberation Sans" font-size="5.2" fill="#333">Show more  ›</text><rect x="76.4" y="260.5" width="28" height="0.5" fill="#333"/><rect x="76" y="272.8" width="253.6" height="0.6" fill="#ececec"/><text x="76.4" y="295" font-family="Liberation Sans" font-size="9.4" fill="#222">Where you'll sleep</text><rect x="360.4" y="73.8" width="138.8" height="195.7" rx="4" fill="#fff" filter="url(#blr)" opacity="0.12" transform="translate(0,2)" style="fill:#000"/><rect x="360.4" y="73.8" width="138.8" height="195.7" rx="4" fill="#fff" stroke="#f0f0f0" stroke-width="0.6"/><text x="369" y="91.9" font-family="Liberation Sans" font-size="7.6" fill="#222"><tspan font-weight="700">$175</tspan><tspan font-size="5.5"> / night</tspan></text><text x="490.3" y="91.5" text-anchor="end" font-family="Liberation Sans" font-size="5" fill="#333">5.0 · <tspan text-decoration="underline">7 reviews</tspan></text><path d="M453 86.5 L454 88.6 L456.2 88.8 L454.5 90.2 L455 92.3 L453 91.2 L451 92.3 L451.5 90.2 L449.8 88.8 L452 88.6 Z" fill="#6c5ce7"/><rect x="369" y="101" width="121.3" height="38.7" rx="2" fill="#fff" stroke="#e2e2e2" stroke-width="0.6"/><path d="M429.4 101 V119.7 M369 119.7 H490.3" stroke="#e2e2e2" stroke-width="0.6"/><text x="372" y="108" font-family="Liberation Sans" font-size="3.3" font-weight="700" fill="#333">CHECK-IN</text><text x="372" y="115.5" font-family="Liberation Sans" font-size="4.8" fill="#888">2/19/2022</text><text x="432.5" y="108" font-family="Liberation Sans" font-size="3.3" font-weight="700" fill="#333">CHECKOUT</text><text x="432.5" y="115.5" font-family="Liberation Sans" font-size="4.8" fill="#888">2/26/2022</text><text x="372" y="127.5" font-family="Liberation Sans" font-size="3.3" font-weight="700" fill="#333">GUESTS</text><text x="372" y="135.3" font-family="Liberation Sans" font-size="4.8" fill="#888">2 guests</text><path d="M479.5 129.5 L481.2 131.2 L482.9 129.5" fill="none" stroke="#333" stroke-width="0.6"/><rect x="369" y="146.2" width="121.3" height="16.4" rx="3" fill="#7062e8"/><text x="429.6" y="156.3" text-anchor="middle" font-family="Liberation Sans" font-size="5" fill="#fff">Reserve</text><text x="429.6" y="174.7" text-anchor="middle" font-family="Liberation Sans" font-size="4.8" fill="#a0a0a8">You won't be charged yet</text><text x="369" y="189" font-family="Liberation Sans" font-size="5.5" fill="#2a2a2a">$175 × 7 nights</text><text x="490.3" y="189" text-anchor="end" font-family="Liberation Sans" font-size="5.5" fill="#2a2a2a">$1225</text><text x="369" y="201" font-family="Liberation Sans" font-size="5.5" fill="#2a2a2a">Weekly discount</text><text x="490.3" y="201" text-anchor="end" font-family="Liberation Sans" font-size="5.5" fill="#4fc79a">-$28</text><text x="369" y="213.1" font-family="Liberation Sans" font-size="5.5" fill="#2a2a2a">Cleaning fee</text><text x="490.3" y="213.1" text-anchor="end" font-family="Liberation Sans" font-size="5.5" fill="#2a2a2a">$62</text><text x="369" y="225.2" font-family="Liberation Sans" font-size="5.5" fill="#2a2a2a">Service fee</text><text x="490.3" y="225.2" text-anchor="end" font-family="Liberation Sans" font-size="5.5" fill="#2a2a2a">$83</text><text x="369" y="237.2" font-family="Liberation Sans" font-size="5.5" fill="#2a2a2a">Occupancy taxes and fees</text><text x="490.3" y="237.2" text-anchor="end" font-family="Liberation Sans" font-size="5.5" fill="#2a2a2a">$29</text><text x="369" y="258.3" font-family="Liberation Sans" font-size="5.5" fill="#2a2a2a">Total</text><text x="490.3" y="258.3" text-anchor="end" font-family="Liberation Sans" font-size="5.5" fill="#2a2a2a">$1371</text><rect x="369" y="245.2" width="121.3" height="0.5" fill="#eee"/><rect x="341.5" y="193.1" width="170.7" height="85.5" fill="none" stroke="#e23fe0" stroke-width="2.1"/><text x="441" y="284.5" text-anchor="middle" font-family="Liberation Sans" font-size="4.8" fill="#888" text-decoration="underline">Report this listing</text><path d="M406 280 V285 M406 280.3 H410 L409 281.5 L410 282.7 H406" fill="none" stroke="#777" stroke-width="0.6"/><rect x="1" y="1" width="573" height="301" fill="none" stroke="#d5dbe2" stroke-width="2"/></svg>
<div class="r" style="left:2168px;top:876px;width:576px;height:303px;background:#f1f9fc;border:2px dashed #b5def0;box-sizing:border-box"></div>
<svg class="r" style="left:2400px;top:950px;" width="112" height="95" viewBox="0 0 112 95"><g transform="translate(6,4) scale(4.1667)"><path d="M19.35 10.04C18.67 6.59 15.64 4 12 4 9.11 4 6.6 5.64 5.35 8.04 2.34 8.36 0 10.91 0 14c0 3.31 2.69 6 6 6h13c2.76 0 5-2.24 5-5 0-2.64-2.05-4.78-4.65-4.96zM14 13v4h-4v-4H7l5-5 5 5h-3z" fill="#438ca9" fill-rule="evenodd"/></g></svg>
<div class="t" style="left:2286px;top:1083.0px;font-size:26px;font-weight:400;color:#1e2129;-webkit-text-stroke:0.35px currentColor;letter-spacing:-1.1px;">Click or drag to upload an image</div>
<div class="r" style="left:2744px;top:1420px;width:96px;height:96px;background:#000;border-radius:50%;box-shadow:0 2px 12px rgba(0,0,0,0.14)"></div>
<svg class="r" style="left:2768px;top:1443px;" width="50" height="52" viewBox="0 0 50 52"><path d="M7.1 0.8 H41.1 Q45.1 0.8 45.1 4.8 V48.9 L35 43.8 H7.1 Q3.1 43.8 3.1 39.8 V4.8 Q3.1 0.8 7.1 0.8 Z" fill="#fff"/><path d="M9.2 31.2 Q24.1 43 39.1 31.2" fill="none" stroke="#000" stroke-width="2.8" stroke-linecap="round"/></svg>
<svg class="r" style="left:1930px;top:930px;" width="230" height="30" viewBox="0 0 230 30"><path d="M10.7 14.3 H203" stroke="#e8391e" stroke-width="3.2"/><path d="M202 6.5 L217 14 L202 21.2 Z" fill="#e8391e" stroke="#e8391e" stroke-width="0.6" stroke-linejoin="round"/></svg>
</body></html>
